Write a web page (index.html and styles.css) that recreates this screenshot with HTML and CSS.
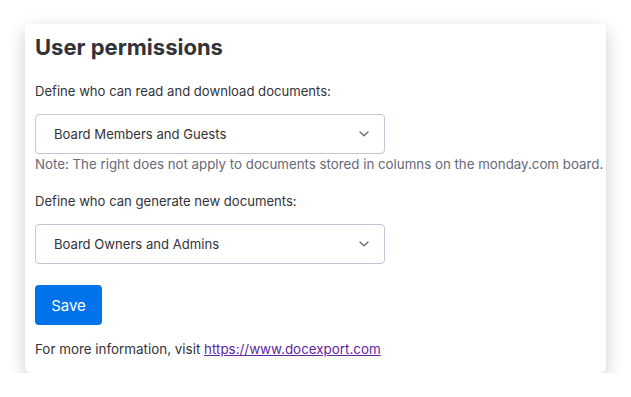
FILE: index.html
```html
<!DOCTYPE html>
<html lang="en">
<head>
    <meta charset="UTF-8">
    <meta name="viewport" content="width=device-width, initial-scale=1.0">
    <title>User permissions</title>
    <link rel="stylesheet" href="styles.css">
</head>
<body>
    <div class="card">
        <h1>User permissions</h1>

        <p class="label">Define who can read and download documents:</p>
        <div class="select">
            <span>Board Members and Guests</span>
            <svg class="chevron" width="12" height="8" viewBox="0 0 12 8"><path d="M2 2 L6 5.8 L10 2" fill="none" stroke="#676879" stroke-width="1.3" stroke-linecap="round" stroke-linejoin="round"/></svg>
        </div>
        <p class="note">Note: The right does not apply to documents stored in columns on the monday.com board.</p>

        <p class="label second">Define who can generate new documents:</p>
        <div class="select">
            <span>Board Owners and Admins</span>
            <svg class="chevron" width="12" height="8" viewBox="0 0 12 8"><path d="M2 2 L6 5.8 L10 2" fill="none" stroke="#676879" stroke-width="1.3" stroke-linecap="round" stroke-linejoin="round"/></svg>
        </div>

        <button class="save">Save</button>

        <p class="info">For more information, visit <a href="https://www.docexport.com">https://www.docexport.com</a></p>
    </div>
</body>
</html>
```

FILE: styles.css
```css
body {
    margin: 0;
    padding: 24px 25px 0 25px;
    background-color: #ffffff;
    font-family: 'Inter', 'Roboto', sans-serif;
    color: #323338;
}

.card {
    width: 581px;
    box-sizing: border-box;
    padding: 8px 10px 16px 10px;
    background-color: #fff;
    border-radius: 0 0 6px 6px;
    box-shadow: 0 6px 18px rgba(0, 0, 0, 0.2);
}

h1 {
    margin: 0;
    font-size: 22px;
    font-weight: 700;
    line-height: 30px;
    color: #323338;
}

.label {
    margin: 21px 0 15px 0;
    font-size: 13.1px;
    line-height: 16px;
}

.label.second {
    margin-top: 21px;
}

.select {
    width: 350px;
    height: 40px;
    box-sizing: border-box;
    border: 1px solid #c3c6d4;
    border-radius: 4px;
    padding: 0 14px 0 18px;
    display: flex;
    align-items: center;
    justify-content: space-between;
    font-size: 13.1px;
}

.note {
    margin: 2px 0 0 0;
    font-size: 13.3px;
    line-height: 16px;
    color: #676879;
    white-space: nowrap;
}

.save {
    margin-top: 21px;
    display: block;
    width: 67px;
    height: 40px;
    border: none;
    border-radius: 4px;
    background-color: #0073ea;
    color: #fff;
    font-family: inherit;
    font-size: 15px;
    cursor: pointer;
}

.info {
    margin: 16px 0 0 0;
    font-size: 13.4px;
    line-height: 16px;
}

.info a {
    color: #5f259f;
}
```
